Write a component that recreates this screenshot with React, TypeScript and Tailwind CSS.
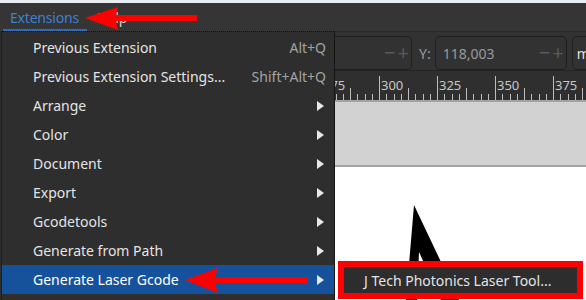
import React from "react";

const items: { label: string; shortcut?: string; sub?: boolean; active?: boolean }[] = [
  { label: "Previous Extension", shortcut: "Alt+Q" },
  { label: "Previous Extension Settings...", shortcut: "Shift+Alt+Q" },
  { label: "Arrange", sub: true },
  { label: "Color", sub: true },
  { label: "Document", sub: true },
  { label: "Export", sub: true },
  { label: "Gcodetools", sub: true },
  { label: "Generate from Path", sub: true },
  { label: "Generate Laser Gcode", sub: true, active: true },
];

function Ruler() {
  const ticks: React.ReactNode[] = [];
  const labels: React.ReactNode[] = [];
  for (let k = -1; k <= 4; k++) {
    const base = 379 + 58 * k - 335;
    for (let j = 0; j < 8; j++) {
      const x = base + j * 7.25;
      const h = j === 0 ? 25 : j === 4 ? 13 : 7;
      ticks.push(<line key={`${k}-${j}`} x1={Math.round(x) + 0.5} x2={Math.round(x) + 0.5} y1={30 - h} y2={30} stroke="#bdbdbd" strokeWidth={1} />);
    }
    labels.push(
      <text key={k} x={base + 2} y={19} fill="#c8c8c8" fontSize="13" fontFamily="'Noto Sans', sans-serif">
        {300 + 25 * k}
      </text>
    );
  }
  return (
    <svg width="251" height="30" className="block">
      {ticks}
      {labels}
    </svg>
  );
}

export default function App() {
  return (
    <div className="relative w-[586px] h-[300px] overflow-hidden bg-[#e9eef2]" style={{ fontFamily: "'Noto Sans', 'Open Sans', sans-serif" }}>
      <div className="h-[3px] bg-[#e9eef2]" />
      {/* menubar */}
      <div className="relative h-[28px] bg-[#353535] flex items-center text-[14px]">
        <span className="ml-[10px] text-[#3d80d2] tracking-[-0.2px]">Extensions</span>
        <span className="ml-[18px] text-[#d8d8d8]">Help</span>
        <div className="absolute left-[3px] bottom-0 w-[84px] h-[2px] bg-[#2a6cc0]" />
      </div>
      {/* main area */}
      <div className="flex h-[269px]">
        <div className="w-[335px] shrink-0 bg-[#2e2e2e]" />
        <div className="flex-1 min-w-0 overflow-hidden flex flex-col">
          {/* toolbar */}
          <div className="h-[39px] shrink-0 bg-[#323232] border-t border-[#2a2a2a] flex items-start pt-[4px] text-[14px] text-[#9a9a9a] whitespace-nowrap">
            <div className="w-[77px] shrink-0 h-[34px] rounded-r-[5px] border border-l-0 border-[#1e1e1e] flex items-center justify-end pr-[2px]">
              <span className="text-[#5a5a5a] text-[20px] leading-none">−</span>
              <span className="text-[#5a5a5a] text-[20px] leading-none ml-[2px]">+</span>
            </div>
            <span className="ml-[7px] mt-[7px]">Y:</span>
            <div className="ml-[4px] w-[132px] shrink-0 h-[34px] rounded-[5px] border border-[#1e1e1e] flex items-center pl-[7px] pr-[2px]">
              <span className="flex-1">118,003</span>
              <span className="text-[#5a5a5a] text-[20px] leading-none">−</span>
              <span className="text-[#5a5a5a] text-[20px] leading-none ml-[2px]">+</span>
            </div>
            <div className="ml-[5px] w-[40px] shrink-0 h-[34px] rounded-[5px] border border-[#1e1e1e] flex items-center pl-[4px] text-[#e0e0e0]">
              m
            </div>
          </div>
          {/* ruler */}
          <div className="h-[30px] shrink-0 bg-[#2f2f2f] border-t border-[#232323]">
            <Ruler />
          </div>
          {/* canvas */}
          <div className="relative flex-1 bg-white">
            <div className="h-[67px] bg-[#d2d2d2] border-y-2 border-[#a3a3a3]" />
            <svg className="absolute left-0 top-0" width="251" height="200">
              <polygon points="79,105 124,200 106,200 84,152 82,200 71,200" fill="#000" />
            </svg>
          </div>
        </div>
      </div>

      {/* dropdown menu */}
      <div className="absolute left-[1px] top-[31px] w-[334px] h-[269px] bg-[#2e2e2e] border-l border-[#1f1f1f] border-r border-r-[#151515] pt-[2px]">
        <div className="absolute left-0 top-0 w-full border-t border-dotted border-[#111]" />
        {items.map((it) => (
          <div
            key={it.label}
            className={`h-[29px] flex items-center pl-[31px] pr-[10px] text-[14px] ${it.active ? "bg-[#16529b] text-white" : "text-[#e4e4e4]"}`}
          >
            <span className="flex-1 whitespace-nowrap">{it.label}</span>
            {it.shortcut && <span className="text-[#a3a3a3] mr-[-2px]">{it.shortcut}</span>}
            {it.sub && (
              <svg width="7" height="10" viewBox="0 0 7 10">
                <polygon points="0,0 7,5 0,10" fill="#e8e8e8" />
              </svg>
            )}
          </div>
        ))}
      </div>

      {/* submenu with red highlight box */}
      <div className="absolute left-[338px] top-[261px] w-[245px] h-[38px] border-[6px] border-[#ff0000] bg-[#2d2d2d] flex items-center pl-[20px] text-[14px] text-[#e4e4e4] whitespace-nowrap">
        J Tech Photonics Laser Tool...
      </div>

      {/* red arrows */}
      <svg className="absolute left-0 top-0 pointer-events-none" width="586" height="300">
        <polygon points="85,18 118,7 116,15 197,15 197,21 116,21 118,30" fill="#ff0000" />
        <polygon points="185,280 218,268 215,277 308,277 308,283 215,283 218,293" fill="#ff0000" />
      </svg>
    </div>
  );
}
